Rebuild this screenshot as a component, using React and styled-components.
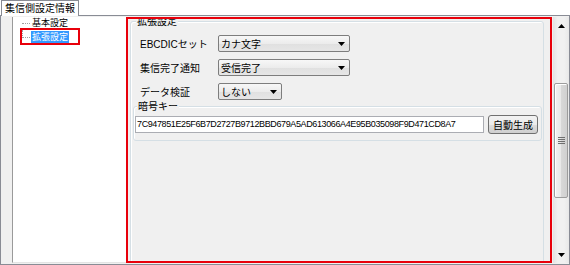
import React from "react";
import styled, { createGlobalStyle } from "styled-components";

const GlobalStyle = createGlobalStyle`
  html, body {
    margin: 0;
    padding: 0;
    background: #fff;
  }
  body {
    font-family: "Liberation Sans", "Noto Sans CJK JP", sans-serif;
    font-size: 10px;
    color: #000;
  }
`;

const Window = styled.div`
  width: 570px;
  height: 265px;
  display: flex;
  flex-direction: column;
  overflow: hidden;
  background: #fff;
`;

const TabStrip = styled.div`
  display: flex;
  height: 15px;
  padding-left: 1px;
  position: relative;
  z-index: 1;
`;

const Tab = styled.div`
  height: 16px;
  box-sizing: border-box;
  padding: 0 3px;
  border: 1px solid #898c95;
  border-bottom: none;
  background: #fff;
  line-height: 15px;
  font-size: 10px;
`;

const TabPage = styled.div`
  flex: 1;
  display: flex;
  border: 1px solid #898c95;
  background: #f0f0f0;
  padding: 1px 0 1px 11px;
  min-height: 0;
`;

const Tree = styled.div`
  width: 114px;
  box-sizing: border-box;
  background: #fff;
  border-left: 1px solid #9a9a9a;
  border-bottom: 1px solid #e4e4e4;
  padding: 1px 0 0 7px;
  display: flex;
  flex-direction: column;
  align-items: flex-start;
  font-size: 9px;
`;

const TreeRow = styled.div`
  display: flex;
  align-items: center;
  height: ${({ $h }) => $h}px;
  padding-left: ${({ $indent }) => $indent || 0}px;
`;

const Branch = styled.span`
  width: 8px;
  box-sizing: border-box;
  align-self: flex-start;
  height: ${({ $h }) => $h}px;
  border-bottom: 1px dotted #a0a0a0;
  border-left: ${({ $last }) => ($last ? "1px dotted #a0a0a0" : "none")};
`;

const NodeLabel = styled.span`
  margin-left: 1px;
  padding: 0 1px;
  line-height: 12px;
  height: 12px;
  align-self: ${({ $selected }) => ($selected ? "flex-end" : "center")};
  background: ${({ $selected }) => ($selected ? "#3399ff" : "transparent")};
  color: ${({ $selected }) => ($selected ? "#fff" : "#000")};
`;

const Annotation = styled.div`
  width: 60px;
  height: 17px;
  box-sizing: border-box;
  border: 2px solid #e8000b;
  display: flex;
`;

const RightArea = styled.div`
  flex: 1;
  display: flex;
  gap: 1px;
  min-width: 0;
`;

const RedPanel = styled.div`
  width: 426px;
  box-sizing: border-box;
  border: 2px solid #e8000b;
  overflow: hidden;
  background: #f0f0f0;
  padding: 0 6px 0 2px;
`;

const GroupBox = styled.div`
  border: 1px solid #d5dfe5;
  border-radius: 3px;
  margin: ${({ $m }) => $m};
  min-height: ${({ $minH }) => $minH || 0}px;
  box-shadow: inset 1px 1px 0 #fff;
`;

const Legend = styled.div`
  display: table;
  margin: -6px 0 0 ${({ $left }) => $left}px;
  padding: 0 1px;
  line-height: 11px;
  background: #f0f0f0;
  font-size: 10px;
`;

const FormGrid = styled.div`
  display: grid;
  grid-template-columns: 78px auto;
  row-gap: 7px;
  align-items: center;
  padding: 8px 0 0 9px;
`;

const Label = styled.span`
  font-size: 10px;
`;

const Combo = styled.div`
  width: ${({ $w }) => $w}px;
  height: 17px;
  box-sizing: border-box;
  border: 1px solid #7d7d7d;
  border-radius: 2px;
  background: linear-gradient(#f7f7f7, #ececec 50%, #e0e0e0 51%, #e6e6e6);
  display: flex;
  align-items: center;
  justify-content: space-between;
  padding: 0 4px 0 2px;
  font-size: 10px;
`;

const KeyBody = styled.div`
  display: flex;
  align-items: center;
  gap: 4px;
  padding: 3px 3px 6px 1px;
`;

const TextField = styled.div`
  width: 349px;
  height: 17px;
  box-sizing: border-box;
  border: 1px solid #abadb3;
  background: #fff;
  padding: 0 1px;
  font-family: "Liberation Sans", sans-serif;
  font-size: 9px;
  letter-spacing: -0.38px;
  line-height: 15px;
  white-space: nowrap;
  overflow: hidden;
`;

const Button = styled.div`
  width: 50px;
  height: 19px;
  box-sizing: border-box;
  border: 1px solid #707070;
  border-radius: 3px;
  background: linear-gradient(#f2f2f2, #ebebeb 50%, #dddddd 51%, #cfcfcf);
  display: flex;
  align-items: center;
  justify-content: center;
  font-size: 10px;
`;

const ScrollBar = styled.div`
  width: 16px;
  display: flex;
  flex-direction: column;
  background: linear-gradient(to right, #e3e3e3, #f1f1f1 30%, #f1f1f1 70%, #e8e8e8);
`;

const ArrowButton = styled.div`
  height: 17px;
  display: flex;
  align-items: center;
  justify-content: center;
`;

const Track = styled.div`
  flex: 1;
  display: flex;
  flex-direction: column;
  align-items: center;
`;

const Thumb = styled.div`
  width: 14px;
  box-sizing: border-box;
  border: 1px solid #9c9c9c;
  border-radius: 2px;
  background: linear-gradient(to right, #f3f3f3, #e8e8e8 50%, #d8d8d8 51%, #d0d0d0);
  box-shadow: inset 1px 1px 0 #fff;
  display: flex;
  align-items: center;
  justify-content: center;
`;

const Arrow = ({ up }) => (
  <svg width="7" height="4" viewBox="0 0 7 4">
    <polygon points={up ? "3.5,0 7,4 0,4" : "0,0 7,0 3.5,4"} fill="#000" />
  </svg>
);

const Grip = () => (
  <svg width="7" height="7" viewBox="0 0 7 7">
    {[0, 2, 4, 6].map((y) => (
      <rect key={y} x="0" y={y} width="7" height="1" fill="#6f6f6f" />
    ))}
  </svg>
);

const ComboBox = ({ value, width }) => (
  <Combo $w={width}>
    <span>{value}</span>
    <Arrow />
  </Combo>
);

const rows = [
  { label: "EBCDICセット", value: "カナ文字", width: 132 },
  { label: "集信完了通知", value: "受信完了", width: 132 },
  { label: "データ検証", value: "しない", width: 64 },
];

const scroll = { top: 49, height: 115 };

export default function App() {
  return (
    <>
      <GlobalStyle />
      <Window>
        <TabStrip>
          <Tab>集信側設定情報</Tab>
        </TabStrip>
        <TabPage>
          <Tree>
            <TreeRow $h={10} $indent={2}>
              <Branch $h={6} />
              <NodeLabel>基本設定</NodeLabel>
            </TreeRow>
            <Annotation>
              <Branch $h={8} $last />
              <NodeLabel $selected>拡張設定</NodeLabel>
            </Annotation>
          </Tree>
          <RightArea>
            <RedPanel>
              <GroupBox $m="2px 0 0 0" $minH={300}>
                <Legend $left={5}>拡張設定</Legend>
                <FormGrid>
                  {rows.map((r) => (
                    <React.Fragment key={r.label}>
                      <Label>{r.label}</Label>
                      <ComboBox value={r.value} width={r.width} />
                    </React.Fragment>
                  ))}
                </FormGrid>
                <GroupBox $m="6px 1px 0 2px">
                  <Legend $left={3}>暗号キー</Legend>
                  <KeyBody>
                    <TextField>
                      7C947851E25F6B7D2727B9712BBD679A5AD613066A4E95B035098F9D471CD8A7
                    </TextField>
                    <Button>自動生成</Button>
                  </KeyBody>
                </GroupBox>
              </GroupBox>
            </RedPanel>
            <ScrollBar>
              <ArrowButton>
                <Arrow up />
              </ArrowButton>
              <Track>
                <Thumb style={{ marginTop: scroll.top, height: scroll.height }}>
                  <Grip />
                </Thumb>
              </Track>
              <ArrowButton>
                <Arrow />
              </ArrowButton>
            </ScrollBar>
          </RightArea>
        </TabPage>
      </Window>
    </>
  );
}
